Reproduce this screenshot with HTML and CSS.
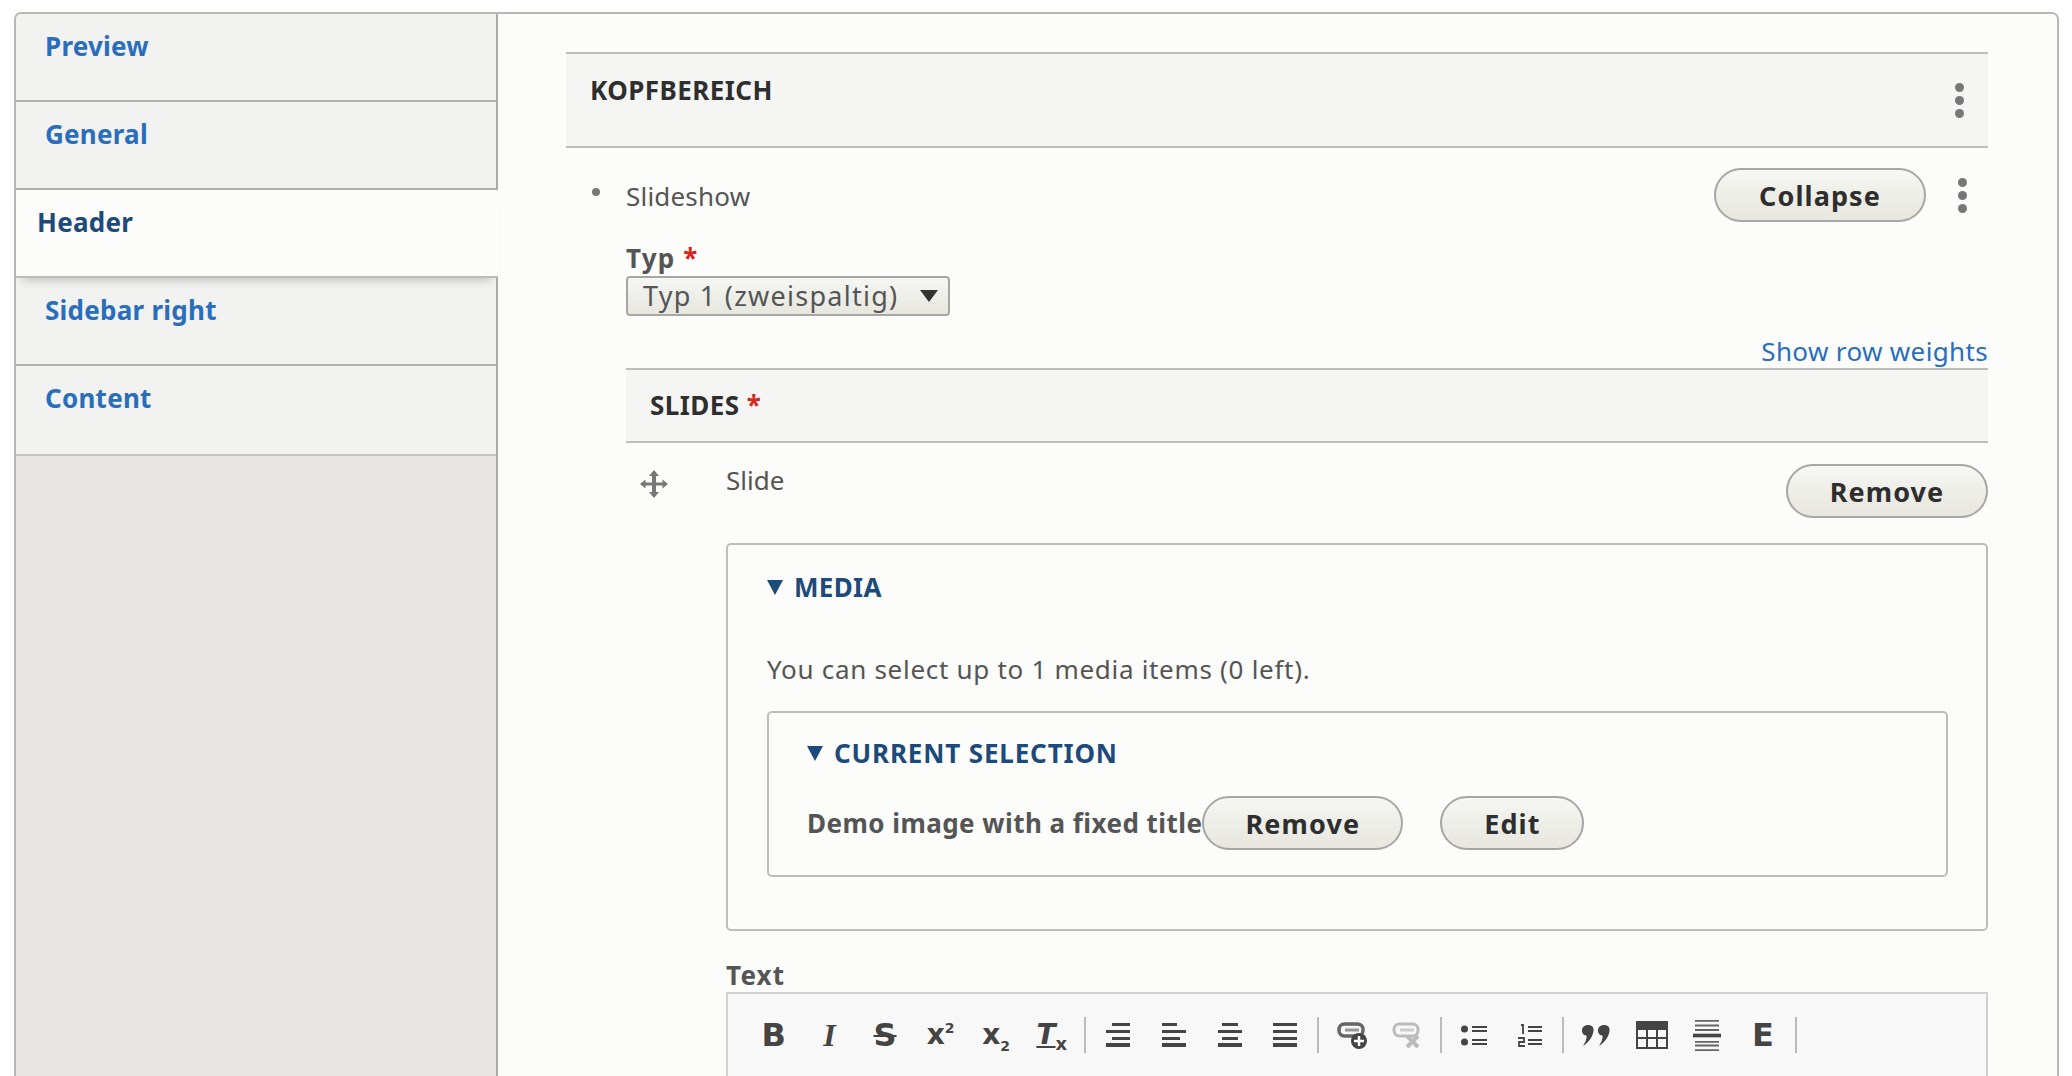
FILE: index.html
```html
<!DOCTYPE html>
<html lang="en">
<head>
    <meta charset="UTF-8">
    <title>Header</title>
    <link rel="stylesheet" href="styles.css">
</head>
<body>
    <div class="panel">
        <ul class="tabs">
            <li class="tab"><a href="#">Preview</a></li>
            <li class="tab"><a href="#">General</a></li>
            <li class="tab active"><a href="#">Header</a></li>
            <li class="tab after-active"><a href="#">Sidebar right</a></li>
            <li class="tab"><a href="#">Content</a></li>
        </ul>

        <div class="main">
            <div class="bar bar-top">
                <h3>Kopfbereich</h3>
                <span class="kebab"><i></i><i></i><i></i></span>
            </div>

            <div class="row-slideshow">
                <div class="row-title"><span class="bullet"></span>Slideshow</div>
                <button class="btn btn-collapse">Collapse</button>
                <span class="kebab"><i></i><i></i><i></i></span>
            </div>

            <div class="nested">
                <label class="label">Typ <span class="req">*</span></label>
                <div class="select">Typ 1 (zweispaltig)<span class="select-arrow"></span></div>

                <div class="weights"><a href="#">Show row weights</a></div>

                <div class="bar bar-slides">
                    <h3>Slides <span class="req">*</span></h3>
                </div>

                <div class="slide">
                    <svg class="drag" viewBox="0 0 28 28" width="28" height="28">
                        <path fill="#777" d="M14 0l5 6h-3v6.500h6.500V9.500l5.500 4.500-5.500 4.500v-3H16V22h3l-5 6-5-6h3v-6.500H5.500v3L0 14l5.500-4.500v3H12V6H9z"/>
                    </svg>
                    <div class="slide-body">
                        <div class="slide-head">
                            <span>Slide</span>
                            <button class="btn btn-remove">Remove</button>
                        </div>

                        <div class="fieldset media">
                            <div class="summary"><span class="tri"></span>Media</div>
                            <p class="hint">You can select up to 1 media items (0 left).</p>
                            <div class="fieldset selection">
                                <div class="summary"><span class="tri"></span>Current selection</div>
                                <div class="item">
                                    <strong>Demo image with a fixed title</strong>
                                    <button class="btn btn-item-remove">Remove</button>
                                    <button class="btn btn-edit">Edit</button>
                                </div>
                            </div>
                        </div>

                        <label class="label label-text">Text</label>
                        <div class="toolbar">
                            <span class="tool tool-b">B</span>
                            <span class="tool tool-i">I</span>
                            <span class="tool tool-s">S</span>
                            <span class="tool tool-x">x<sup>2</sup></span>
                            <span class="tool tool-x">x<sub>2</sub></span>
                            <span class="tool tool-tx"><u>T</u><sub>x</sub></span>
                            <span class="sep"></span>
                            <span class="tool"><svg viewBox="0 0 24 24" width="24" height="24"><path fill="#444" d="M6 0h18v3H6zM0 7h24v3H0zM6 14h18v3H6zM0 20h24v4H0z"/></svg></span>
                            <span class="tool"><svg viewBox="0 0 24 24" width="24" height="24"><path fill="#444" d="M0 0h15v3H0zM0 7h24v3H0zM0 14h18v3H0zM0 20h24v4H0z"/></svg></span>
                            <span class="tool"><svg viewBox="0 0 24 24" width="24" height="24"><path fill="#444" d="M4 0h16v3H4zM0 7h24v3H0zM4 14h16v3H4zM0 20h24v4H0z"/></svg></span>
                            <span class="tool"><svg viewBox="0 0 24 24" width="24" height="24"><path fill="#444" d="M0 0h24v3H0zM0 7h24v3H0zM0 14h24v3H0zM0 20h24v4H0z"/></svg></span>
                            <span class="sep"></span>
                            <span class="tool"><svg viewBox="0 0 30 28" width="30" height="28">
                                <rect x="2" y="3" width="24" height="12" rx="5.500" fill="none" stroke="#666" stroke-width="3.500"/>
                                <path fill="none" stroke="#999" stroke-width="3" d="M8 9h14"/>
                                <circle cx="22" cy="20" r="8" fill="#444"/>
                                <path stroke="#fff" stroke-width="2.500" d="M17 20h10M22 15v10"/>
                            </svg></span>
                            <span class="tool"><svg viewBox="0 0 30 28" width="30" height="28">
                                <rect x="2" y="3" width="24" height="12" rx="5.500" fill="none" stroke="#bbb" stroke-width="3"/>
                                <path fill="none" stroke="#ccc" stroke-width="3" d="M8 9h14"/>
                                <path stroke="#bbb" stroke-width="4" d="M15 15l11 11M26 15L15 26"/>
                            </svg></span>
                            <span class="sep"></span>
                            <span class="tool"><svg viewBox="0 0 26 24" width="26" height="24">
                                <circle cx="3.500" cy="6" r="3.500" fill="#444"/><circle cx="3.500" cy="19" r="3.500" fill="#444"/>
                                <path fill="#444" d="M11 3h15v2H11zM11 7h15v2H11zM11 16h15v2H11zM11 20h15v2H11z"/>
                            </svg></span>
                            <span class="tool"><svg viewBox="0 0 24 24" width="24" height="24">
                                <path fill="none" stroke="#444" stroke-width="1.800" d="M3 2h2v9M0 15h6v4H1v4h6"/>
                                <path fill="#444" d="M10 3h14v2H10zM10 7h14v2H10zM10 16h14v2H10zM10 20h14v2H10z"/>
                            </svg></span>
                            <span class="sep"></span>
                            <span class="tool"><svg viewBox="0 0 28 26" width="28" height="21" preserveAspectRatio="none">
                                <path fill="#444" d="M6 0c4 0 6 3 5.500 7C11 14 7 21 1 26c2.500-5 4-9 3.500-13C1 12.500 0 10 0 6.500 0 3 2.500 0 6 0zM22 0c4 0 6 3 5.500 7C27 14 23 21 17 26c2.500-5 4-9 3.500-13C17 12.500 16 10 16 6.500 16 3 18.500 0 22 0z"/>
                            </svg></span>
                            <span class="tool"><svg viewBox="0 0 32 28" width="32" height="28">
                                <path fill="#444" d="M0 0h32v28H0z"/>
                                <path fill="#f8f8f8" d="M2 9h8v7H2zM12 9h8v7h-8zM22 9h8v7h-8zM2 18h8v8H2zM12 18h8v8h-8zM22 18h8v8h-8z"/>
                            </svg></span>
                            <span class="tool"><svg viewBox="0 0 28 34" width="28" height="31" preserveAspectRatio="none">
                                <path fill="#666" d="M2 0h24v2H2zM2 5h24v2H2zM2 10h24v2H2zM2 23h24v2H2zM2 27h24v2H2zM2 32h24v2H2z"/>
                                <path fill="#444" d="M0 15h28v4H0z"/>
                            </svg></span>
                            <span class="tool tool-e">E</span>
                            <span class="sep"></span>
                        </div>
                    </div>
                </div>
            </div>
        </div>
    </div>
</body>
</html>
```

FILE: styles.css
```css
html, body {
    height: 1076px;
    overflow: hidden;
}
body {
    margin: 0;
    padding: 12px 13px 0 14px;
    box-sizing: border-box;
    background: #fff;
    color: #555;
    font-family: "Noto Sans", "Open Sans", sans-serif;
    font-size: 26px;
    line-height: 32px;
}
a {
    text-decoration: none;
    color: #2a6ebb;
}
h3 {
    margin: 0;
    font-size: 26px;
    letter-spacing: .45px;
    color: #2e2e2e;
    text-transform: uppercase;
}
.panel {
    display: flex;
    height: 1300px;
    border: 2px solid #b8b8b6;
    border-radius: 7px 7px 0 0;
    background: #fcfcfa;
}
.tabs {
    flex: none;
    width: 480px;
    margin: 0;
    padding: 0;
    list-style: none;
    background: #e6e5e1;
    border-right: 2px solid #aaa;
    border-top-left-radius: 6px;
}
.tab {
    box-sizing: border-box;
    height: 88px;
    padding: 16px 0 0 29px;
    background: #f2f2f0;
    border-bottom: 2px solid #b0b0ae;
    font-weight: 700;
    letter-spacing: .25px;
}
.tab:first-child {
    border-top-left-radius: 6px;
}
.tab:last-child {
    height: 90px;
    border-bottom-color: #c4c4c2;
}
.active {
    position: relative;
    margin-right: -2px;
    padding-left: 21px;
    background: #fcfcfa;
    border-bottom-color: #bbb;
    box-shadow: 0 9px 9px -7px rgba(0, 0, 0, .22);
}
.active a {
    color: #1c4a7a;
}
.main {
    flex: 1;
    padding: 38px 69px 0 68px;
}
.bar {
    display: flex;
    justify-content: space-between;
    background: #f5f5f3;
    border-top: 2px solid #bdbdbb;
    border-bottom: 2px solid #bdbdbb;
}
.bar-top {
    box-sizing: border-box;
    height: 96px;
    padding: 20px 24px 0 24px;
}
.kebab {
    display: flex;
    flex-direction: column;
    gap: 4px;
    flex: none;
}
.kebab i {
    width: 9px;
    height: 9px;
    border-radius: 50%;
    background: #777;
}
.bar-top .kebab {
    padding-top: 9px;
}
.row-slideshow {
    display: flex;
    align-items: center;
    padding: 20px 21px 0 0;
}
.row-title {
    display: flex;
    align-items: center;
    flex: 1;
    padding: 1px 0 0 26px;
    letter-spacing: .2px;
}
.bullet {
    flex: none;
    width: 8px;
    height: 8px;
    margin: -7px 26px 0 0;
    border-radius: 50%;
    background: #777;
}
.btn {
    box-sizing: border-box;
    height: 54px;
    padding: 0;
    border: 2px solid #a6a6a4;
    border-radius: 27px;
    background: linear-gradient(#f6f6f3, #e7e7df);
    color: #2e2e2e;
    font: 700 27px "Noto Sans", "Open Sans", sans-serif;
    letter-spacing: 1.100px;
}
.btn-collapse {
    width: 212px;
    margin-right: 32px;
}
.nested {
    margin-left: 60px;
}
.label {
    display: block;
    margin: 20px 0 2px;
    font-weight: 700;
    line-height: 32px;
    letter-spacing: 1.200px;
}
.label .req {
    letter-spacing: 0;
}
.req {
    color: #d8261c;
}
.select {
    box-sizing: border-box;
    display: flex;
    align-items: center;
    justify-content: space-between;
    width: 324px;
    height: 40px;
    padding: 0 10px 0 15px;
    border: 2px solid #a6a6a4;
    border-radius: 4px;
    background: linear-gradient(#f6f6f3, #e7e7df);
    font-size: 27px;
    letter-spacing: 1.250px;
}
.select-arrow {
    width: 0;
    height: 0;
    border-style: solid;
    border-width: 12px 9px 0;
    border-color: #333 transparent transparent;
}
.weights {
    margin-top: 18px;
    text-align: right;
    line-height: 34px;
    letter-spacing: .35px;
}
.bar-slides {
    box-sizing: border-box;
    height: 75px;
    padding: 19px 24px 0;
}
.slide {
    display: flex;
    align-items: flex-start;
}
.drag {
    flex: none;
    margin: 27px 58px 0 14px;
}
.slide-body {
    flex: 1;
    min-width: 0;
}
.slide-head {
    display: flex;
    justify-content: space-between;
    padding-top: 21px;
}
.btn-remove {
    width: 202px;
}
.fieldset {
    box-sizing: border-box;
    border: 2px solid #bdbdbb;
    border-radius: 5px;
}
.media {
    height: 388px;
    margin-top: 25px;
    padding: 26px 38px 0 39px;
}
.summary {
    display: flex;
    align-items: center;
    color: #1c4a7a;
    font-weight: 700;
    text-transform: uppercase;
    letter-spacing: .3px;
}
.selection .summary {
    letter-spacing: .85px;
}
.tri {
    flex: none;
    width: 0;
    height: 0;
    margin-right: 11px;
    border-style: solid;
    border-width: 15px 8.500px 0;
    border-color: #1c4a7a transparent transparent;
}
.hint {
    margin: 50px 0 0;
    letter-spacing: .7px;
}
.selection {
    height: 166px;
    margin-top: 26px;
    padding: 24px 38px 0;
}
.item {
    display: flex;
    align-items: center;
    margin-top: 27px;
    letter-spacing: .45px;
}
.btn-item-remove {
    width: 201px;
    margin-right: 37px;
}
.btn-edit {
    width: 144px;
}
.label-text {
    margin: 28px 0 1px;
}
.toolbar {
    display: flex;
    align-items: flex-start;
    box-sizing: border-box;
    height: 110px;
    padding: 21px 0 0 18px;
    border: 2px solid #d0d0d0;
    border-bottom: 0;
    background: #f8f8f8;
    color: #444;
}
.tool {
    display: flex;
    align-items: center;
    justify-content: center;
    flex: none;
    width: 55.600px;
    height: 40px;
    font-weight: 700;
    font-size: 32px;
    line-height: 40px;
}
.tool sup, .tool sub {
    font-size: 14px;
    line-height: 1;
}
.tool sup {
    align-self: flex-start;
    margin-top: 6px;
}
.tool sub {
    align-self: flex-end;
    margin-bottom: 2px;
}
.tool-b, .tool-s, .tool-e {
    font-family: "DejaVu Sans", sans-serif;
}
.tool-i {
    font-family: "Liberation Serif", serif;
    font-style: italic;
}
.tool-s {
    text-decoration: line-through;
    text-decoration-thickness: 2px;
}
.tool-x {
    font-family: "DejaVu Sans", sans-serif;
    font-size: 28px;
}
.tool-tx {
    font-family: "DejaVu Sans", sans-serif;
    font-style: italic;
    font-size: 28px;
}
.tool-tx sub {
    font-style: normal;
    font-size: 18px;
}
.sep {
    flex: none;
    width: 2px;
    height: 36px;
    margin: 2px 4.500px 0;
    background: #bbb;
}
```
